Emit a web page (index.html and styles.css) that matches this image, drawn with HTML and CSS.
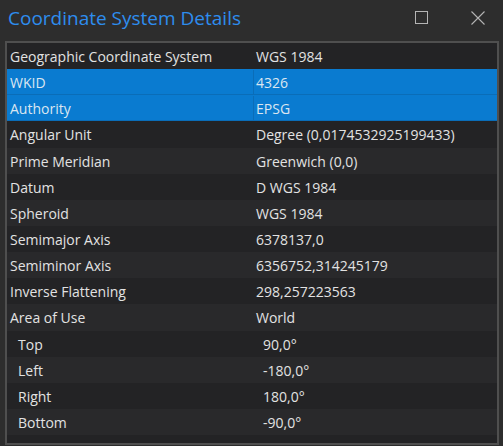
FILE: index.html
```html
<!DOCTYPE html>
<html>
<head>
<meta charset="utf-8">
<link rel="stylesheet" href="styles.css">
</head>
<body>
<div class="window">
  <div class="titlebar">
    <div class="title">Coordinate System Details</div>
    <div class="controls">
      <svg class="ctl" width="14" height="14" viewBox="0 0 14 14"><rect x="0.5" y="0.5" width="12" height="12" fill="none" stroke="#b4b4b4" stroke-width="1"/></svg>
      <svg class="ctl" width="14" height="14" viewBox="0 0 14 14"><path d="M0.5 0.5 L13.5 13.5 M13.5 0.5 L0.5 13.5" stroke="#b4b4b4" stroke-width="1.1" fill="none"/></svg>
    </div>
  </div>
  <div class="grid">
    <div class="row"><div class="key">Geographic Coordinate System</div><div class="val">WGS 1984</div></div>
    <div class="row sel"><div class="key">WKID</div><div class="val">4326</div></div>
    <div class="row sel"><div class="key">Authority</div><div class="val">EPSG</div></div>
    <div class="row"><div class="key">Angular Unit</div><div class="val">Degree (0,0174532925199433)</div></div>
    <div class="row"><div class="key">Prime Meridian</div><div class="val">Greenwich (0,0)</div></div>
    <div class="row"><div class="key">Datum</div><div class="val">D WGS 1984</div></div>
    <div class="row"><div class="key">Spheroid</div><div class="val">WGS 1984</div></div>
    <div class="row"><div class="key">Semimajor Axis</div><div class="val">6378137,0</div></div>
    <div class="row"><div class="key">Semiminor Axis</div><div class="val">6356752,314245179</div></div>
    <div class="row"><div class="key">Inverse Flattening</div><div class="val">298,257223563</div></div>
    <div class="row"><div class="key">Area of Use</div><div class="val">World</div></div>
    <div class="row sub"><div class="key">Top</div><div class="val">90,0°</div></div>
    <div class="row sub"><div class="key">Left</div><div class="val">-180,0°</div></div>
    <div class="row sub"><div class="key">Right</div><div class="val">180,0°</div></div>
    <div class="row sub"><div class="key">Bottom</div><div class="val">-90,0°</div></div>
  </div>
</div>
</body>
</html>
```

FILE: styles.css
```css
html, body {
  margin: 0;
  padding: 0;
  background: #2d2d2d;
}
.window {
  width: 503px;
  height: 446px;
  display: flex;
  flex-direction: column;
  font-family: "Open Sans", "Noto Sans", sans-serif;
}
.titlebar {
  height: 41px;
  display: flex;
  align-items: flex-start;
  justify-content: space-between;
}
.title {
  color: #2d8def;
  font-size: 19px;
  line-height: 24px;
  padding: 6px 0 0 8px;
}
.controls {
  display: flex;
  gap: 42px;
  padding: 11px 18px 0 0;
}
.ctl {
  display: block;
}
.grid {
  margin: 0 4px 1px 5px;
  border: 2px solid #4f4f4f;
  background: #232325;
  flex: 1;
}
.row {
  height: 26.15px;
  display: flex;
  align-items: center;
  color: #e2e2e2;
  font-size: 14px;
  padding-top: 1px;
  box-sizing: border-box;
}
.row:nth-child(odd) {
  background: #29292b;
}
.row:nth-child(even) {
  background: #232325;
}
.row:first-child {
  background: #232325;
}
.row.sel {
  background: #0a7bd0;
  color: #dbe6f0;
  box-shadow: inset 0 -1px 0 #0a6db8;
}
.key {
  box-sizing: border-box;
  width: 246px;
  padding-left: 3px;
  white-space: nowrap;
}
.val {
  flex: 1;
  padding-left: 3px;
  align-self: stretch;
  display: flex;
  align-items: center;
}
.row.sel .val {
  border-left: 1px solid #0a6db8;
  padding-left: 2px;
}
.row.sub .key,
.row.sub .val {
  padding-left: 11px;
}
.row.sub .val {
  padding-left: 10px;
}
```
